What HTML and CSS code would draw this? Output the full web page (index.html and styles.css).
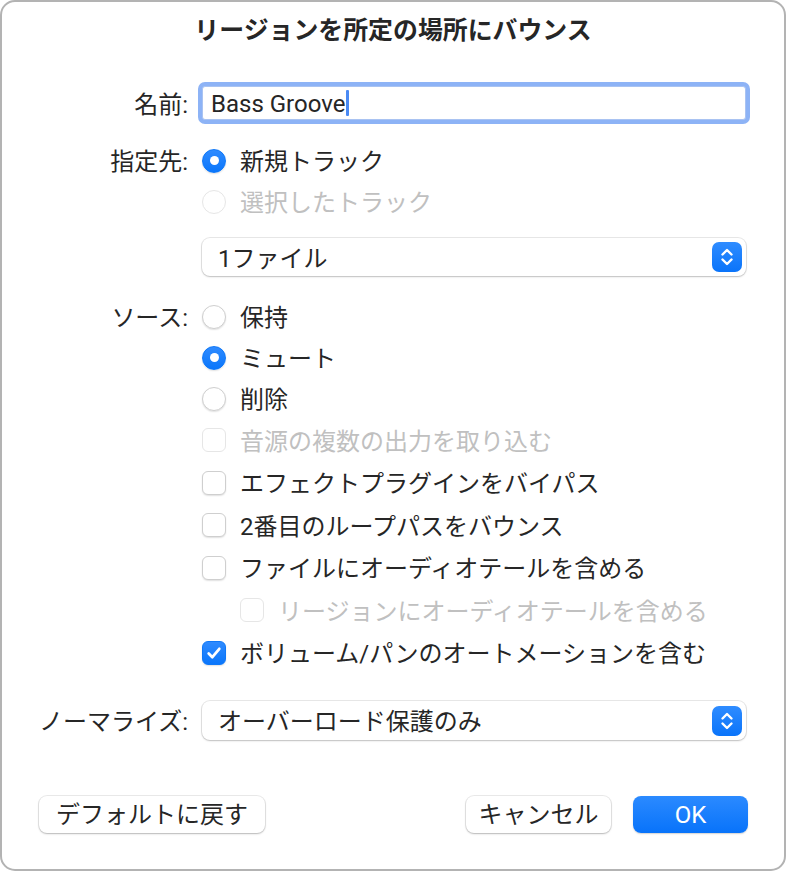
FILE: index.html
```html
<!DOCTYPE html>
<html lang="ja">
<head>
<meta charset="utf-8">
<title>リージョンを所定の場所にバウンス</title>
<link rel="stylesheet" href="styles.css">
</head>
<body>
<div class="window">
  <h1 class="title">リージョンを所定の場所にバウンス</h1>
  <div class="form">
    <div class="row row-name">
      <div class="label">名前:</div>
      <div class="field"><span class="field-text">Bass Groove</span><span class="caret"></span></div>
    </div>

    <div class="row row-radio gap-dest">
      <div class="label">指定先:</div>
      <div class="option"><span class="radio on"></span><span class="opt-text">新規トラック</span></div>
    </div>
    <div class="row row-radio">
      <div class="label"></div>
      <div class="option disabled"><span class="radio"></span><span class="opt-text">選択したトラック</span></div>
    </div>

    <div class="row row-popup gap-popup">
      <div class="label"></div>
      <div class="popup">
        <span class="popup-text">1ファイル</span>
        <span class="stepper"><svg width="30" height="30" viewBox="0 0 30 30"><path d="M10.5 12.5 L15 8 L19.5 12.5 M10.5 17.5 L15 22 L19.5 17.5" fill="none" stroke="#fff" stroke-width="2.4" stroke-linecap="round" stroke-linejoin="round"/></svg></span>
      </div>
    </div>

    <div class="row row-radio gap-source">
      <div class="label">ソース:</div>
      <div class="option"><span class="radio"></span><span class="opt-text">保持</span></div>
    </div>
    <div class="row row-radio">
      <div class="label"></div>
      <div class="option"><span class="radio on"></span><span class="opt-text">ミュート</span></div>
    </div>
    <div class="row row-radio">
      <div class="label"></div>
      <div class="option"><span class="radio"></span><span class="opt-text">削除</span></div>
    </div>

    <div class="row row-check">
      <div class="label"></div>
      <div class="option disabled"><span class="check"></span><span class="opt-text">音源の複数の出力を取り込む</span></div>
    </div>
    <div class="row row-check">
      <div class="label"></div>
      <div class="option"><span class="check"></span><span class="opt-text">エフェクトプラグインをバイパス</span></div>
    </div>
    <div class="row row-check">
      <div class="label"></div>
      <div class="option"><span class="check"></span><span class="opt-text">2番目のループパスをバウンス</span></div>
    </div>
    <div class="row row-check">
      <div class="label"></div>
      <div class="option"><span class="check"></span><span class="opt-text">ファイルにオーディオテールを含める</span></div>
    </div>
    <div class="row row-check">
      <div class="label"></div>
      <div class="option disabled indent"><span class="check"></span><span class="opt-text">リージョンにオーディオテールを含める</span></div>
    </div>
    <div class="row row-check">
      <div class="label"></div>
      <div class="option"><span class="check on"><svg width="24" height="24" viewBox="0 0 24 24"><path d="M6.2 12.6 L10.2 16.6 L17.8 7.4" fill="none" stroke="#fff" stroke-width="3" stroke-linecap="round" stroke-linejoin="round"/></svg></span><span class="opt-text">ボリューム/パンのオートメーションを含む</span></div>
    </div>

    <div class="row row-popup gap-normalize">
      <div class="label">ノーマライズ:</div>
      <div class="popup popup-tall">
        <span class="popup-text">オーバーロード保護のみ</span>
        <span class="stepper"><svg width="30" height="30" viewBox="0 0 30 30"><path d="M10.5 12.5 L15 8 L19.5 12.5 M10.5 17.5 L15 22 L19.5 17.5" fill="none" stroke="#fff" stroke-width="2.4" stroke-linecap="round" stroke-linejoin="round"/></svg></span>
      </div>
    </div>
  </div>

  <div class="footer">
    <button class="btn btn-default">デフォルトに戻す</button>
    <div class="footer-right">
      <button class="btn btn-cancel">キャンセル</button>
      <button class="btn btn-ok">OK</button>
    </div>
  </div>
</div>
</body>
</html>
```

FILE: styles.css
```css
* { box-sizing: border-box; }

html, body {
  margin: 0;
  padding: 0;
  background: #ffffff;
}

body {
  font-family: "Roboto", "Noto Sans CJK JP", sans-serif;
  font-size: 24px;
  color: #262626;
}

.window {
  width: 786px;
  height: 871px;
  border: 2px solid #b3b3b3;
  border-radius: 15px;
  background: #ffffff;
  display: flex;
  flex-direction: column;
}

.title {
  margin: 13px 0 0 0;
  height: 32px;
  line-height: 32px;
  font-size: 24.9px;
  font-weight: 700;
  text-align: center;
  color: #262626;
}

.form {
  display: flex;
  flex-direction: column;
}

.row {
  display: grid;
  grid-template-columns: 186px 544px;
  column-gap: 14px;
  align-items: center;
}

.label {
  text-align: right;
  white-space: nowrap;
  line-height: 1;
  padding-top: 3px;
}

.row-name { height: 42px; margin-top: 35px; }
.row-radio { height: 41px; }
.row-check { height: 42.5px; }
.row-popup { height: 38px; }

.gap-dest { margin-top: 16px; }
.gap-popup { margin-top: 16px; }
.gap-source { margin-top: 20px; }
.gap-normalize { margin-top: 27px; height: 39px; }

/* text field */
.field {
  height: 34px;
  display: flex;
  align-items: center;
  padding-left: 8px;
  background: #fff;
  border: 1px solid #a9c3f2;
  border-radius: 3px;
  box-shadow: 0 0 0 4px #8db3f6;
}
.field-text { line-height: 1; padding-top: 2px; }
.caret {
  display: inline-block;
  width: 3px;
  height: 26px;
  margin-left: 1px;
  border-radius: 1px;
  background: #4a8af4;
}

/* options */
.option {
  display: flex;
  align-items: center;
  gap: 14px;
  white-space: nowrap;
}
.option.indent { padding-left: 38px; }
.opt-text { line-height: 1; padding-top: 3px; }
.option.disabled .opt-text { color: #c0c0c0; }

.radio {
  width: 24px;
  height: 24px;
  border-radius: 50%;
  background: #fff;
  border: 1px solid #cfcfcf;
  box-shadow: 0 1px 1.5px rgba(0, 0, 0, 0.12);
  display: flex;
  align-items: center;
  justify-content: center;
  flex: none;
}
.radio.on {
  background: linear-gradient(#2f8bff, #0a76fb);
  border-color: #0f78f8;
}
.radio.on::after {
  content: "";
  width: 9px;
  height: 9px;
  border-radius: 50%;
  background: #fff;
}
.option.disabled .radio {
  border-color: #e6e6e6;
  box-shadow: none;
}

.check {
  width: 24px;
  height: 24px;
  border-radius: 6px;
  background: #fff;
  border: 1px solid #cfcfcf;
  box-shadow: 0 1px 1.5px rgba(0, 0, 0, 0.12);
  display: flex;
  align-items: center;
  justify-content: center;
  flex: none;
}
.check svg { display: block; }
.check.on {
  background: linear-gradient(#2f8bff, #0a76fb);
  border-color: #0f78f8;
}
.option.disabled .check {
  border-color: #e6e6e6;
  box-shadow: none;
}

/* popups */
.popup {
  height: 38px;
  display: flex;
  align-items: center;
  padding-left: 16px;
  padding-right: 4px;
  background: #fff;
  border-radius: 8px;
  box-shadow: 0 0 0 1px rgba(0, 0, 0, 0.09), 0 1px 2px rgba(0, 0, 0, 0.18);
}
.popup-tall { height: 39px; }
.popup-text { line-height: 1; padding-top: 3px; }
.stepper {
  margin-left: auto;
  width: 30px;
  height: 30px;
  border-radius: 7px;
  background: linear-gradient(#2f8cff, #0a74fa);
  display: flex;
}
.stepper svg { display: block; }

/* footer */
.footer {
  margin-top: 56px;
  padding-left: 37px;
  display: flex;
  width: 746px;
  align-items: center;
}
.footer-right {
  margin-left: auto;
  display: flex;
  gap: 22px;
}
.btn {
  font-family: "Roboto", "Noto Sans CJK JP", sans-serif;
  font-size: 24px;
  color: #262626;
  height: 37px;
  border: none;
  border-radius: 8px;
  background: #fff;
  box-shadow: 0 0 0 1px rgba(0, 0, 0, 0.08), 0 1px 2px rgba(0, 0, 0, 0.22);
  line-height: 1;
  padding: 0;
  white-space: nowrap;
}
.btn-default { width: 226px; }
.btn-cancel { width: 145px; }
.btn-ok {
  width: 115px;
  color: #fff;
  background: linear-gradient(#2b8aff, #0873fa);
  box-shadow: 0 1px 1.5px rgba(0, 0, 0, 0.18);
}
```
